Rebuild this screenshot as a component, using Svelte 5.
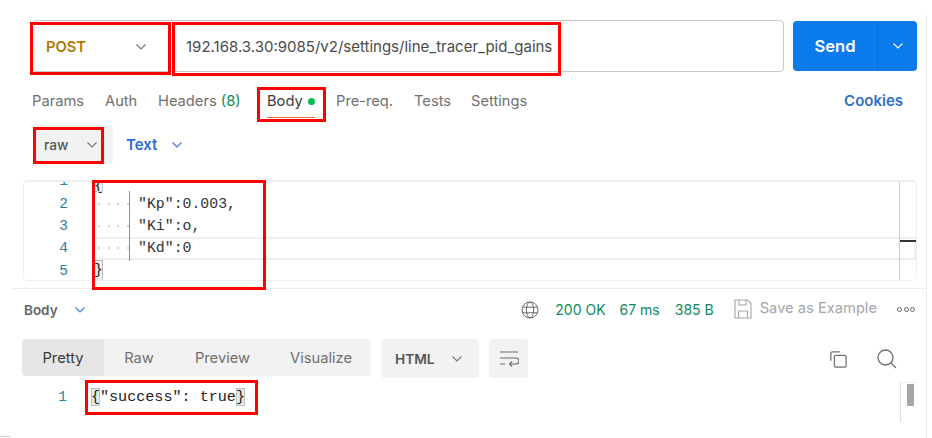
<script>
  const tabs = [
    { label: 'Params', w: 73 },
    { label: 'Auth', w: 53 },
    { label: 'Headers', extra: '(8)', w: 109 },
    { label: 'Body', dot: true, active: true, w: 69 },
    { label: 'Pre-req.', w: 78 },
    { label: 'Tests', w: 57 },
    { label: 'Settings', w: 90 }
  ];
  const lines = [
    { n: 1, cls: 'clip' },
    { n: 2, text: '"Kp":0.003,' },
    { n: 3, text: '"Ki":o,' },
    { n: 4, text: '"Kd":0', cur: true },
    { n: 5, close: true }
  ];
  const views = [
    { label: 'Pretty', w: 82, active: true },
    { label: 'Raw', w: 70 },
    { label: 'Preview', w: 97 },
    { label: 'Visualize', w: 100 }
  ];
</script>

{#snippet chev(cls)}
  <svg class={cls} width="12" height="8" viewBox="0 0 12 8"><path d="M1.5 1.5 6 6l4.5-4.5" fill="none" stroke="currentColor" stroke-width="1.1"/></svg>
{/snippet}

<div class="page">
  <div class="urlrow">
    <div class="urlbox">
      <div class="method"><span>POST</span>{@render chev('c-grey')}</div>
      <div class="url">192.168.3.30:9085/v2/settings/line_tracer_pid_gains</div>
    </div>
    <div class="send">
      <span class="send-l">Send</span>
      <span class="send-r">{@render chev('c-white')}</span>
    </div>
  </div>

  <div class="tabs">
    {#each tabs as t}
      <div class="tab" class:active={t.active} style="width:{t.w}px">
        {t.label}{#if t.extra}&nbsp;<span class="green">{t.extra}</span>{/if}{#if t.dot}<i class="dot"></i>{/if}
      </div>
    {/each}
    <div class="cookies">Cookies</div>
  </div>

  <div class="bodybar">
    <div class="raw"><span>raw</span>{@render chev('c-grey')}</div>
    <div class="text"><span>Text</span>{@render chev('c-blue')}</div>
  </div>

  <div class="editor">
    <div class="code">
      {#each lines as l}
        <div class="line" class:cur={l.cur}>
          <span class="num" class:clip={l.cls}>{l.n}</span>
          {#if l.text}
            <span class="ws"><i></i><i></i><i></i><i></i></span><span class="guide"></span><span class="tx">{l.text}</span>
          {:else if l.close}
            <span class="brace close">{'}'}</span>
          {:else}
            <span class="brace top">{'{'}</span>
          {/if}
        </div>
      {/each}
    </div>
    <div class="rail"><i class="mark"></i></div>
  </div>

  <div class="resbar">
    <div class="reslabel"><span>Body</span>{@render chev('c-blue')}</div>
    <div class="meta">
      <svg class="globe" width="18" height="18" viewBox="0 0 18 18" fill="none" stroke="#6b6b6b" stroke-width="1"><circle cx="9" cy="9" r="8"/><ellipse cx="9" cy="9" rx="3.6" ry="8"/><path d="M1.5 6.2h15M1.5 11.8h15"/></svg>
      <span class="ok s1">200 OK</span>
      <span class="ok s2">67 ms</span>
      <span class="ok s3">385 B</span>
      <svg class="save" width="18" height="20" viewBox="0 0 18 20" fill="none" stroke="#a6a6a6" stroke-width="1.1"><path d="M1 1h12.5L17 4.5V19H1z"/><path d="M5 1v5h7V1M4.5 19v-7h9v7"/></svg>
      <span class="saveas">Save as Example</span>
      <span class="more"><i></i><i></i><i></i></span>
    </div>
  </div>

  <div class="restool">
    <div class="views">
      {#each views as v}
        <div class="view" class:active={v.active} style="width:{v.w}px">{v.label}</div>
      {/each}
    </div>
    <div class="html"><span>HTML</span>{@render chev('c-grey')}</div>
    <div class="wrap">
      <svg width="20" height="18" viewBox="0 0 20 18" fill="none" stroke="#6b6b6b" stroke-width="1.1"><path d="M1 2h18M1 8h16a2.5 2.5 0 0 1 0 6h-6M1 14h5M13 11.5 10.5 14l2.5 2.5"/></svg>
    </div>
    <div class="tools">
      <svg width="18" height="18" viewBox="0 0 20 20" fill="none" stroke="#707070" stroke-width="1.4"><rect x="6" y="6" width="13" height="13" rx="1.5"/><path d="M12 2H4a2 2 0 0 0-2 2v8"/></svg>
      <svg width="20" height="20" viewBox="0 0 20 20" fill="none" stroke="#707070" stroke-width="1.3"><circle cx="8.5" cy="8.5" r="7.5"/><path d="m14 14 5 5"/></svg>
    </div>
  </div>

  <div class="resline">
    <span class="rnum">1</span>
    <span class="rcode"><b class="bm">{'{'}</b>"success": true<b class="bm">{'}'}</b></span>
    <div class="rscroll"><i></i></div>
  </div>

  <i class="endrule"></i>
  <i class="sideline"></i>

  <i class="redbox r-post"></i>
  <i class="redbox r-url"></i>
  <i class="redbox r-body"></i>
  <i class="redbox r-raw"></i>
  <i class="redbox r-code"></i>
  <i class="redbox r-res"></i>
</div>

<style>
  :global(body) { margin: 0; background: #fff; }
  .page {
    position: relative;
    width: 932px;
    height: 438px;
    overflow: hidden;
    background: #fff;
    font-family: Inter, "Liberation Sans", sans-serif;
    font-size: 14.7px;
    color: #6b6b6b;
  }
  .c-grey { color: #777; }
  .c-white { color: #fff; }
  .c-blue { color: #3a78d8; }

  .urlrow { display: flex; gap: 9px; padding: 20px 15px 0 32px; height: 52px; }
  .urlbox {
    flex: 1;
    display: flex;
    align-items: center;
    border: 1px solid #c8c8c8;
    border-radius: 4px;
    box-sizing: border-box;
  }
  .method {
    width: 133px;
    padding: 2px 19px 0 13px;
    box-sizing: border-box;
    display: flex;
    align-items: center;
    justify-content: space-between;
    color: #ad7a03;
    font-weight: 600;
    font-size: 14.7px;
  }
  .url { padding-left: 20px; color: #4a4a4a; font-size: 15px; white-space: nowrap; }
  .send {
    width: 124px;
    height: 50px;
    margin-top: 1px;
    display: flex;
    background: #097bed;
    border-radius: 4px;
    color: #fff;
    font-weight: 600;
    font-size: 16.6px;
  }
  .send-l { width: 84px; display: flex; align-items: center; justify-content: center; }
  .send-r { flex: 1; display: flex; align-items: center; justify-content: center; border-left: 1px solid #0a6fd4; }

  .tabs { display: flex; height: 34px; margin-top: 11px; padding-left: 32px; align-items: flex-start; }
  .tab { line-height: 36px; white-space: nowrap; color: #707070; height: 35px; }
  .tab.active { color: #3a3a3a; position: relative; }
  .tab.active::after { content: ''; position: absolute; left: 0; bottom: 0; width: 48px; height: 1.5px; background: #f26b3a; }
  .green { color: #0b8a4b; }
  .dot { display: inline-block; width: 7px; height: 7px; border-radius: 50%; background: #0cbb52; margin-left: 5px; vertical-align: 1px; }
  .cookies { margin-left: auto; margin-right: 29px; line-height: 36px; color: #2f6fc9; font-weight: 600; font-size: 15px; }

  .bodybar { display: flex; align-items: center; gap: 14px; padding-left: 34px; margin-top: 8px; height: 39px; }
  .raw {
    width: 79px;
    height: 39px;
    box-sizing: border-box;
    padding: 0 15px 0 10px;
    background: #f2f2f2;
    border-radius: 4px;
    display: flex;
    align-items: center;
    justify-content: space-between;
    font-size: 13.7px;
    font-weight: 500;
    color: #555;
  }
  .text { display: flex; align-items: center; gap: 14px; margin-left: -1px; color: #2c6ed5; font-weight: 600; font-size: 15px; }

  .editor {
    display: flex;
    margin: 16px 15px 0 23px;
    height: 101px;
    box-sizing: border-box;
    border: 1px solid #efefef;
    border-top-width: 2px;
    border-radius: 5px;
    overflow: hidden;
  }
  .code { flex: 1; margin-top: -12px; font-family: "Liberation Mono", monospace; font-size: 14.85px; }
  .line { display: flex; align-items: center; height: 22.4px; box-sizing: border-box; color: #333; position: relative; }
  .line.cur::before {
    content: '';
    position: absolute;
    left: 70px;
    right: -17px;
    top: 0;
    bottom: 0;
    box-sizing: border-box;
    border: 2px solid #efefef;
    border-left: 0;
  }
  .num { width: 44px; text-align: right; margin-right: 26px; color: #2d7da3; font-size: 14.5px; }
  .ws { display: flex; gap: 7.5px; width: 34px; flex: none; padding-left: 4px; box-sizing: border-box; }
  .ws i { width: 2px; height: 2px; background: #d6d6d6; flex: none; }
  .guide { position: absolute; left: 105px; top: -1px; bottom: -1px; width: 1px; background: #8c8c8c; }
  .tx { margin-left: 10px; position: relative; }
  .brace { background: #eee; outline: 1px solid #ccc; outline-offset: -1px; width: 9px; color: #222; height: 22px; line-height: 20px; flex: none; text-align: center; }
  .brace.top { height: 12px; line-height: 12px; align-self: flex-end; }
  .brace.close { outline-color: #bbb; }
  .rail { width: 16px; border-left: 1px solid #ccc; position: relative; flex: none; }
  .mark { position: absolute; left: 0; right: 0; top: 58px; height: 2px; background: #333; }

  .resbar {
    display: flex;
    justify-content: space-between;
    align-items: center;
    height: 42px;
    margin: 7px 6px 0 12px;
    padding: 0 11px 0 12px;
    box-sizing: border-box;
    border-top: 1px solid #ececec;
  }
  .reslabel { display: flex; align-items: center; gap: 16px; font-size: 13.5px; font-weight: 600; color: #666; }
  .meta { display: flex; align-items: center; font-size: 14px; }
  .ok { color: #0d8a5e; white-space: nowrap; }
  .s1 { margin-left: 16px; }
  .s2 { margin-left: 14px; }
  .s3 { margin-left: 15px; }
  .save { margin-left: 20px; margin-top: -2px; }
  .saveas { margin-left: 8px; margin-top: -3px; color: #a6a6a6; font-size: 14.7px; white-space: nowrap; }
  .more { display: flex; gap: 1.5px; margin-left: 20px; }
  .more i { width: 5px; height: 5px; box-sizing: border-box; border: 1px solid #666; border-radius: 50%; }

  .restool { display: flex; margin-top: 9px; padding: 0 15px 0 22px; height: 39px; }
  .views { display: flex; background: #f2f2f2; border-radius: 4px; height: 37px; width: 349px; overflow: hidden; }
  .view { display: flex; align-items: center; justify-content: center; color: #707070; }
  .view.active { background: #e6e6e6; color: #3a3a3a; }
  .html {
    margin-left: 10px;
    width: 98px;
    height: 39px;
    box-sizing: border-box;
    padding: 0 16px 0 14px;
    background: #f2f2f2;
    border-radius: 4px;
    display: flex;
    align-items: center;
    justify-content: space-between;
    font-size: 13.7px;
    font-weight: 600;
    color: #555;
  }
  .wrap { margin-left: 10px; width: 39px; height: 39px; background: #f2f2f2; border-radius: 4px; display: flex; align-items: center; justify-content: center; }
  .tools { margin-left: auto; margin-right: 20px; display: flex; gap: 30px; align-items: center; height: 39px; }

  .resline { display: flex; align-items: center; height: 24px; margin-top: 7px; position: relative; font-family: "Liberation Mono", monospace; font-size: 15.1px; color: #222; }
  .rnum { width: 67px; text-align: right; margin-right: 24px; color: #2d7da3; font-size: 14.5px; }
  .rcode { white-space: nowrap; }
  .bm { font-weight: 400; display: inline-block; width: 9px; background: #e6ebe6; outline: 1px solid #b8c4b8; outline-offset: -1px; }
  .rscroll { position: absolute; left: 900px; top: -3px; width: 17px; height: 40px; box-sizing: border-box; border-left: 1px solid #ddd; border-top: 1px solid #eee; }
  .rscroll i { position: absolute; left: 6px; top: 1px; width: 7px; height: 22px; background: #a6a6a6; }

  .endrule { position: absolute; left: 0; top: 436px; width: 10px; height: 1px; background: #ccc; }
  .sideline { position: absolute; left: 926px; top: 15px; bottom: 0; width: 1px; background: #ececec; }

  .redbox { position: absolute; border: 3px solid #f00; box-sizing: border-box; pointer-events: none; }
  .r-post { left: 30px; top: 22px; width: 141px; height: 53px; }
  .r-url { left: 172px; top: 22px; width: 389px; height: 54px; }
  .r-body { left: 257px; top: 87px; width: 69px; height: 35px; }
  .r-raw { left: 33px; top: 127px; width: 71px; height: 37px; }
  .r-code { left: 92px; top: 180px; width: 174px; height: 110px; }
  .r-res { left: 85px; top: 380px; width: 173px; height: 35px; }
</style>
